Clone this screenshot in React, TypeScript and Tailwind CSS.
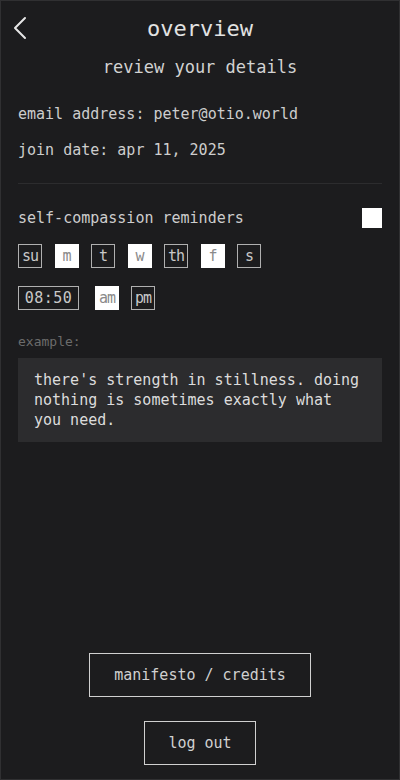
const days = [
  { label: 'su', on: false },
  { label: 'm', on: true },
  { label: 't', on: false },
  { label: 'w', on: true },
  { label: 'th', on: false },
  { label: 'f', on: true },
  { label: 's', on: false },
];

const mono = { fontFamily: '"DejaVu Sans Mono", "Liberation Mono", monospace' };

function Toggle({ label, on, wide }: { label: string; on: boolean; wide?: boolean }) {
  return (
    <div
      className={`flex h-[24px] items-center justify-center border text-[15px] leading-none ${
        wide ? 'w-[61px] tracking-[0.5px]' : 'w-[24px] tracking-[-1px]'
      } ${
        on ? 'border-white bg-white text-[#8a8a8a]' : 'border-[#b0b0b0] text-[#c8c8c8]'
      }`}
    >
      {label}
    </div>
  );
}

export default function App() {
  return (
    <div
      className="flex h-[780px] w-[400px] flex-col border border-[#303032] bg-[#1c1c1e] text-[#cdcdcd]"
      style={mono}
    >
      <div className="mt-[13px] flex h-[28px] items-center">
        <div className="flex w-[60px] pl-[12px]">
          <svg width="14" height="24" viewBox="0 0 14 24" fill="none">
            <polyline
              points="12,2 2,12 12,22"
              stroke="#e6e6e6"
              strokeWidth="2"
              strokeLinecap="round"
              strokeLinejoin="round"
            />
          </svg>
        </div>
        <h1 className="flex-1 text-center text-[22px] font-light text-[#e2e2e2]">overview</h1>
        <div className="w-[60px]" />
      </div>

      <p className="mt-[13px] text-center text-[17px] leading-[24px] text-[#d2d2d2]">
        review your details
      </p>

      <div className="flex flex-1 flex-col px-[17px]">
        <p className="mt-[25px] text-[15px] leading-[20px]">email address: peter@otio.world</p>
        <p className="mt-[16px] text-[15px] leading-[20px]">join date: apr 11, 2025</p>

        <div className="mt-[23px] h-px bg-[#2c2c2e]" />

        <div className="mt-[24px] flex h-[20px] items-center justify-between">
          <span className="text-[15px]">self-compassion reminders</span>
          <div className="h-[20px] w-[20px] bg-white" />
        </div>

        <div className="mt-[16px] flex gap-[12.5px]">
          {days.map((d) => (
            <Toggle key={d.label} label={d.label} on={d.on} />
          ))}
        </div>

        <div className="mt-[18px] flex gap-[12px]">
          <div className="mr-[4px]">
            <Toggle label="08:50" on={false} wide />
          </div>
          <Toggle label="am" on={true} />
          <Toggle label="pm" on={false} />
        </div>

        <p className="mt-[24px] text-[13px] leading-[16px] text-[#6c6c6c]">example:</p>

        <div className="mt-[8px] bg-[#2c2c2e] px-[16px] py-[12px] text-[15px] leading-[20px] text-[#dcdcdc]">
          there's strength in stillness. doing nothing is sometimes exactly what you need.
        </div>

        <div className="mt-auto flex flex-col items-center gap-[24px] pb-[14px]">
          <button className="h-[44px] w-[222px] border border-[#d0d0d0] text-[15px] text-[#d0d0d0]">
            manifesto / credits
          </button>
          <button className="h-[44px] w-[112px] border border-[#d0d0d0] text-[15px] text-[#d0d0d0]">
            log out
          </button>
        </div>
      </div>
    </div>
  );
}
